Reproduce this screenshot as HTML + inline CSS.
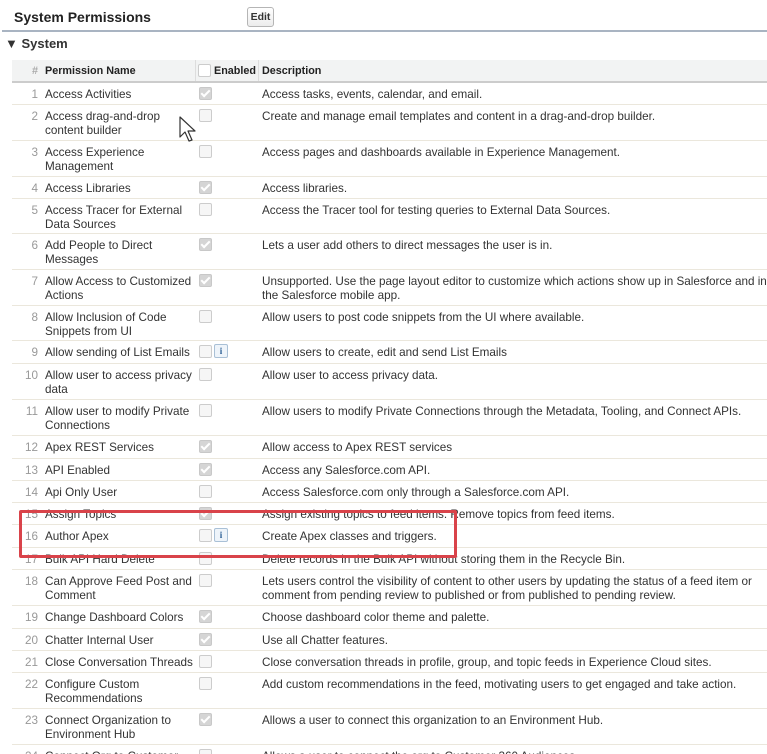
<!DOCTYPE html>
<html><head><meta charset="utf-8"><style>
html{overflow:hidden;height:754px}
body{margin:0;width:767px;height:754px;overflow:hidden;background:#fff;font-family:"Liberation Sans",Arial,sans-serif;font-size:11.7px;color:#333;position:relative}
.abs{position:absolute}
.hdr{left:14px;top:9px;font-size:14px;font-weight:bold;color:#222}
.edit{left:247px;top:7px;width:25px;height:18px;border:1px solid #b5b5b5;border-radius:3px;background:linear-gradient(#fff,#ececec);font-size:10.5px;font-weight:bold;text-align:center;line-height:18px;color:#333}
.rule{left:2px;top:30px;width:765px;height:2px;background:#a9b4c2}
.sys{left:5px;top:36px;font-size:13px;font-weight:bold;color:#333}
.row{position:absolute;left:12px;width:760px;border-bottom:1px solid #ebe7dc;background:#fff}
.th{background:#f2f3f3;border-bottom:2px solid #ccc;font-weight:bold;font-size:10.8px;color:#222}
.n{position:absolute;left:0;width:26px;text-align:right;top:5px;color:#999;line-height:13px}
.nm{position:absolute;left:33px;width:152px;top:5px;line-height:13.5px}
.cb{position:absolute;left:187px;top:4px;width:11px;height:11px;border:1px solid #ccc;border-radius:2px;background:#f6f6f6}
.cb.on{background:#d5d5d5;border-color:#c8c8c8}
.cb.on::after{content:"";position:absolute;left:3px;top:0px;width:3px;height:7px;border:solid #fff;border-width:0 2px 2px 0;transform:rotate(45deg)}
.inf{position:absolute;left:202px;top:3px;width:12px;height:12px;border:1px solid #a9c0d6;border-radius:2px;background:#eef4fa;font-size:9px;font-family:"Liberation Serif",serif;font-weight:bold;color:#2b5e94;text-align:center;line-height:12px}
.d{position:absolute;left:250px;width:505px;top:5px;line-height:13.5px}
.red{left:19px;top:510px;width:432px;height:42px;border:3px solid #d9434a;border-radius:2px}
</style></head><body>
<div class="abs hdr">System Permissions</div>
<div class="abs edit">Edit</div>
<div class="abs rule"></div>
<div class="abs sys">▼ System</div>

<div class="row th" style="top:60px;height:21px">
<span class="n" style="top:5px;color:#aaa">#</span><span class="nm" style="top:5px">Permission Name</span>
<span style="position:absolute;left:183px;top:0;width:1px;height:21px;background:#ddd"></span>
<span class="cb" style="left:186px;top:4px;background:#fff"></span><span style="position:absolute;left:202px;top:5px">Enabled</span>
<span style="position:absolute;left:246px;top:0;width:1px;height:21px;background:#ddd"></span>
<span class="d" style="top:5px">Description</span></div>

<div class="row" style="top:83px;height:21px"><span class="n">1</span><span class="nm">Access Activities</span><span class="cb on"></span><span class="d">Access tasks, events, calendar, and email.</span></div>
<div class="row" style="top:105px;height:35px"><span class="n">2</span><span class="nm">Access drag-and-drop content builder</span><span class="cb"></span><span class="d">Create and manage email templates and content in a drag-and-drop builder.</span></div>
<div class="row" style="top:141px;height:35px"><span class="n">3</span><span class="nm">Access Experience Management</span><span class="cb"></span><span class="d">Access pages and dashboards available in Experience Management.</span></div>
<div class="row" style="top:177px;height:21px"><span class="n">4</span><span class="nm">Access Libraries</span><span class="cb on"></span><span class="d">Access libraries.</span></div>
<div class="row" style="top:199px;height:34px"><span class="n">5</span><span class="nm">Access Tracer for External Data Sources</span><span class="cb"></span><span class="d">Access the Tracer tool for testing queries to External Data Sources.</span></div>
<div class="row" style="top:234px;height:35px"><span class="n">6</span><span class="nm">Add People to Direct Messages</span><span class="cb on"></span><span class="d">Lets a user add others to direct messages the user is in.</span></div>
<div class="row" style="top:270px;height:35px"><span class="n">7</span><span class="nm">Allow Access to Customized Actions</span><span class="cb on"></span><span class="d">Unsupported. Use the page layout editor to customize which actions show up in Salesforce and in the Salesforce mobile app.</span></div>
<div class="row" style="top:306px;height:34px"><span class="n">8</span><span class="nm">Allow Inclusion of Code Snippets from UI</span><span class="cb"></span><span class="d">Allow users to post code snippets from the UI where available.</span></div>
<div class="row" style="top:341px;height:22px"><span class="n">9</span><span class="nm">Allow sending of List Emails</span><span class="cb"></span><span class="inf">i</span><span class="d">Allow users to create, edit and send List Emails</span></div>
<div class="row" style="top:364px;height:35px"><span class="n">10</span><span class="nm">Allow user to access privacy data</span><span class="cb"></span><span class="d">Allow user to access privacy data.</span></div>
<div class="row" style="top:400px;height:35px"><span class="n">11</span><span class="nm">Allow user to modify Private Connections</span><span class="cb"></span><span class="d">Allow users to modify Private Connections through the Metadata, Tooling, and Connect APIs.</span></div>
<div class="row" style="top:436px;height:22px"><span class="n">12</span><span class="nm">Apex REST Services</span><span class="cb on"></span><span class="d">Allow access to Apex REST services</span></div>
<div class="row" style="top:459px;height:21px"><span class="n">13</span><span class="nm">API Enabled</span><span class="cb on"></span><span class="d">Access any Salesforce.com API.</span></div>
<div class="row" style="top:481px;height:21px"><span class="n">14</span><span class="nm">Api Only User</span><span class="cb"></span><span class="d">Access Salesforce.com only through a Salesforce.com API.</span></div>
<div class="row" style="top:503px;height:21px"><span class="n">15</span><span class="nm">Assign Topics</span><span class="cb on"></span><span class="d">Assign existing topics to feed items. Remove topics from feed items.</span></div>
<div class="row" style="top:525px;height:22px"><span class="n">16</span><span class="nm">Author Apex</span><span class="cb"></span><span class="inf">i</span><span class="d">Create Apex classes and triggers.</span></div>
<div class="row" style="top:548px;height:21px"><span class="n">17</span><span class="nm">Bulk API Hard Delete</span><span class="cb"></span><span class="d">Delete records in the Bulk API without storing them in the Recycle Bin.</span></div>
<div class="row" style="top:570px;height:35px"><span class="n">18</span><span class="nm">Can Approve Feed Post and Comment</span><span class="cb"></span><span class="d">Lets users control the visibility of content to other users by updating the status of a feed item or comment from pending review to published or from published to pending review.</span></div>
<div class="row" style="top:606px;height:22px"><span class="n">19</span><span class="nm">Change Dashboard Colors</span><span class="cb on"></span><span class="d">Choose dashboard color theme and palette.</span></div>
<div class="row" style="top:629px;height:21px"><span class="n">20</span><span class="nm">Chatter Internal User</span><span class="cb on"></span><span class="d">Use all Chatter features.</span></div>
<div class="row" style="top:651px;height:21px"><span class="n">21</span><span class="nm">Close Conversation Threads</span><span class="cb"></span><span class="d">Close conversation threads in profile, group, and topic feeds in Experience Cloud sites.</span></div>
<div class="row" style="top:673px;height:35px"><span class="n">22</span><span class="nm">Configure Custom Recommendations</span><span class="cb"></span><span class="d">Add custom recommendations in the feed, motivating users to get engaged and take action.</span></div>
<div class="row" style="top:709px;height:35px"><span class="n">23</span><span class="nm">Connect Organization to Environment Hub</span><span class="cb on"></span><span class="d">Allows a user to connect this organization to an Environment Hub.</span></div>
<div class="row" style="top:745px;height:35px"><span class="n">24</span><span class="nm">Connect Org to Customer 360 Audiences</span><span class="cb"></span><span class="d">Allows a user to connect the org to Customer 360 Audiences.</span></div>

<div class="abs red"></div>
<svg class="abs" style="left:179px;top:116px" width="18" height="28" viewBox="0 0 18 28"><path d="M1 1 L1 21 L6 16 L10 25 L13 24 L9 15 L16 15 Z" fill="#fff" stroke="#333" stroke-width="1.2" stroke-linejoin="round"/></svg>
</body></html>
